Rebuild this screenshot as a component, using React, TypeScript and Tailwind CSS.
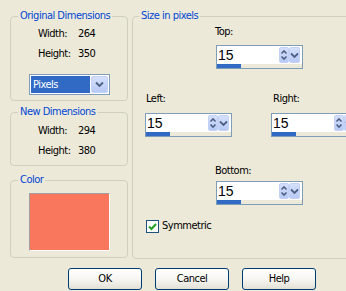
import React from "react";

function UpDownBtn() {
  return (
    <div className="w-[10px] h-[16px] rounded-[2px] bg-gradient-to-b from-[#D5E0FB] to-[#B7C9F5] border border-[#C3D1F5]">
      <svg width="8" height="14" viewBox="0 0 8 14" className="block">
        <path d="M1.5 5.5 L4 3 L6.5 5.5" fill="none" stroke="#4D6185" strokeWidth="1.6" />
        <path d="M1.5 8.5 L4 11 L6.5 8.5" fill="none" stroke="#4D6185" strokeWidth="1.6" />
      </svg>
    </div>
  );
}

function DownBtn({ w = 11, h = 16 }: { w?: number; h?: number }) {
  return (
    <div
      className="rounded-[2px] bg-gradient-to-b from-[#D5E0FB] to-[#B7C9F5] border border-[#C3D1F5] flex items-center justify-center"
      style={{ width: w, height: h }}
    >
      <svg width="9" height="7" viewBox="0 0 9 7" className="block">
        <path d="M1 1.5 L4.5 5 L8 1.5" fill="none" stroke="#4D6185" strokeWidth="1.8" />
      </svg>
    </div>
  );
}

function Spin() {
  return (
    <div className="w-[87px] h-[24px] border border-[#7F9DB9] bg-white flex flex-col">
      <div className="h-[18px] flex">
        <span className="flex-1 pl-[1px] text-[14px] leading-[18px] tracking-normal font-['Liberation_Sans',Arial,sans-serif]">15</span>
        <div className="flex mt-[1px] mr-[2px] h-[16px]">
          <UpDownBtn />
          <DownBtn />
        </div>
      </div>
      <div className="h-[4px] bg-[#ECE9D8] flex">
        <div className="w-[24px] h-[4px] bg-[#316AC5]" />
      </div>
    </div>
  );
}

function Legend({ children }: { children: React.ReactNode }) {
  return (
    <legend className="ml-[7px] px-[2px] leading-[14px] text-[#0046D5]">{children}</legend>
  );
}

function XPButton({ label }: { label: string }) {
  return (
    <button className="w-[74px] h-[22px] rounded-[3px] border border-[#003C74] bg-gradient-to-b from-[#FFFFFF] via-[#F7F6F2] to-[#E3E0D6] text-[11px] leading-[20px] text-black text-center">
      {label}
    </button>
  );
}

export default function App() {
  return (
    <div className="w-[346px] h-[291px] overflow-hidden bg-[#ECE9D8] text-[11px] leading-[14px] tracking-[-0.5px] text-black font-['DejaVu_Sans_Condensed','DejaVu_Sans',sans-serif] [font-stretch:condensed]">
      <div className="flex pl-[10px] pt-[9px] gap-[4px]">
        <div className="w-[118px] shrink-0 flex flex-col">
          <fieldset className="h-[92px] border border-[#D0D0BF] rounded-[4px]">
            <Legend>Original Dimensions</Legend>
            <div className="flex pl-[27px] mt-[4px]">
              <span className="w-[40px]">Width:</span>
              <span>264</span>
            </div>
            <div className="flex pl-[27px] mt-[6px]">
              <span className="w-[40px]">Height:</span>
              <span>350</span>
            </div>
            <div className="ml-[18px] mt-[13px] w-[81px] h-[21px] border border-[#7F9DB9] bg-white flex p-[1px]">
              <div className="flex-1 bg-[#316AC5] text-white pl-[2px] leading-[17px] mr-[1px]">Pixels</div>
              <DownBtn w={17} h={17} />
            </div>
          </fieldset>
          <fieldset className="mt-[4px] h-[61px] border border-[#D0D0BF] rounded-[4px]">
            <Legend>New Dimensions</Legend>
            <div className="flex pl-[27px] mt-[5px]">
              <span className="w-[40px]">Width:</span>
              <span>294</span>
            </div>
            <div className="flex pl-[27px] mt-[6px]">
              <span className="w-[40px]">Height:</span>
              <span>380</span>
            </div>
          </fieldset>
          <fieldset className="mt-[7px] h-[85px] border border-[#D0D0BF] rounded-[4px]">
            <Legend>Color</Legend>
            <div className="ml-[18px] mt-[6px] w-[81px] h-[58px] bg-[#F9775D] border border-t-[#A0A0A0] border-l-[#A0A0A0] border-r-white border-b-white" />
          </fieldset>
        </div>
        <fieldset className="w-[230px] shrink-0 h-[250px] border border-[#D0D0BF] rounded-[4px]">
          <legend className="ml-[6px] px-[2px] leading-[14px] text-[#0046D5]">Size in pixels</legend>
          <div className="ml-[82px] mt-[2px]">Top:</div>
          <div className="ml-[83px] mt-[6px]">
            <Spin />
          </div>
          <div className="flex mt-[23px]">
            <span className="ml-[13px] w-[127px]">Left:</span>
            <span>Right:</span>
          </div>
          <div className="flex mt-[7px]">
            <div className="ml-[12px]">
              <Spin />
            </div>
            <div className="ml-[39px]">
              <Spin />
            </div>
          </div>
          <div className="ml-[82px] mt-[27px]">Bottom:</div>
          <div className="ml-[83px] mt-[3px]">
            <Spin />
          </div>
          <div className="flex items-center ml-[13px] mt-[14px]">
            <div className="w-[13px] h-[13px] border border-[#1C5180] bg-white flex items-center justify-center">
              <svg width="9" height="9" viewBox="0 0 9 9" className="block">
                <path d="M1 4.5 L3.5 7 L8 2" fill="none" stroke="#21A121" strokeWidth="2" />
              </svg>
            </div>
            <span className="ml-[3px]">Symmetric</span>
          </div>
        </fieldset>
      </div>
      <div className="flex gap-[13px] pl-[68px] mt-[9px]">
        <XPButton label="OK" />
        <XPButton label="Cancel" />
        <XPButton label="Help" />
      </div>
    </div>
  );
}
